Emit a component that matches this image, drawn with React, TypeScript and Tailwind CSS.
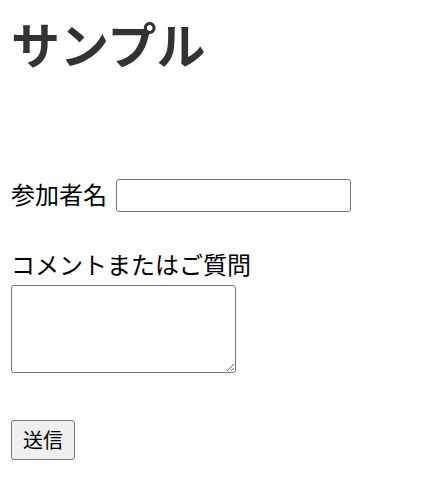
export default function App() {
  return (
    <div
      className="flex flex-col items-start pl-[11px] bg-white min-h-[489px]"
      style={{ fontFamily: '"Noto Sans CJK JP", "Noto Sans", sans-serif' }}
    >
      <h1 className="mt-[19px] text-[49px] leading-[48px] font-bold text-[#333333]">サンプル</h1>
      <div className="mt-[112px] flex items-center gap-[9px] h-[33px]">
        <label className="text-[24px] leading-[24px] text-black -mt-[4px]">参加者名</label>
        <input
          type="text"
          className="w-[235px] h-[33px] border border-[#767676] rounded-[3px] bg-white"
        />
      </div>
      <label className="mt-[40px] text-[24px] leading-[24px] text-black">コメントまたはご質問</label>
      <textarea className="mt-[9px] w-[225px] h-[88px] border border-[#767676] rounded-[3px] bg-white" />
      <button className="mt-[47px] w-[64px] h-[40px] border border-[#767676] rounded-[3px] bg-[#efefef] text-[20px] leading-[24px] text-black">
        送信
      </button>
    </div>
  );
}
